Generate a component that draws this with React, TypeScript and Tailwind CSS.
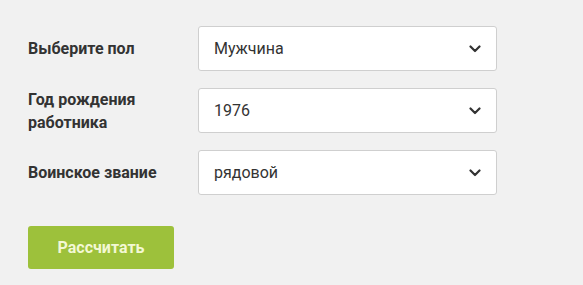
import React from "react";

function Chevron() {
  return (
    <svg width="12" height="8" viewBox="0 0 12 8" fill="none" className="shrink-0">
      <path d="M1.5 1.5 L6 6 L10.5 1.5" stroke="#333" strokeWidth="2.2" strokeLinecap="round" strokeLinejoin="round" />
    </svg>
  );
}

function Row({ label, value }: { label: React.ReactNode; value: string }) {
  return (
    <div className="flex items-center">
      <div className="w-[170px] text-[16px] font-bold leading-[23px] text-[#333]">{label}</div>
      <div className="flex h-[45px] w-[299px] items-center justify-between rounded-[3px] border border-[#cfcfcf] bg-white pl-[15px] pr-[15px] text-[16px] text-[#333]">
        <span>{value}</span>
        <Chevron />
      </div>
    </div>
  );
}

export default function App() {
  return (
    <div
      className="h-[285px] w-[583px] bg-[#f1f1f1] pl-[28px] pt-[26px]"
      style={{ fontFamily: "Roboto, 'Noto Sans', sans-serif" }}
    >
      <div className="flex flex-col gap-[16.5px]">
        <Row label="Выберите пол" value="Мужчина" />
        <Row label={<>Год рождения<br />работника</>} value="1976" />
        <Row label="Воинское звание" value="рядовой" />
      </div>
      <button className="mt-[31px] flex h-[43px] w-[146px] items-center justify-center rounded-[3px] bg-[#9dc13b] text-[16px] font-bold text-[#f3f8d4]">
        Рассчитать
      </button>
    </div>
  );
}
